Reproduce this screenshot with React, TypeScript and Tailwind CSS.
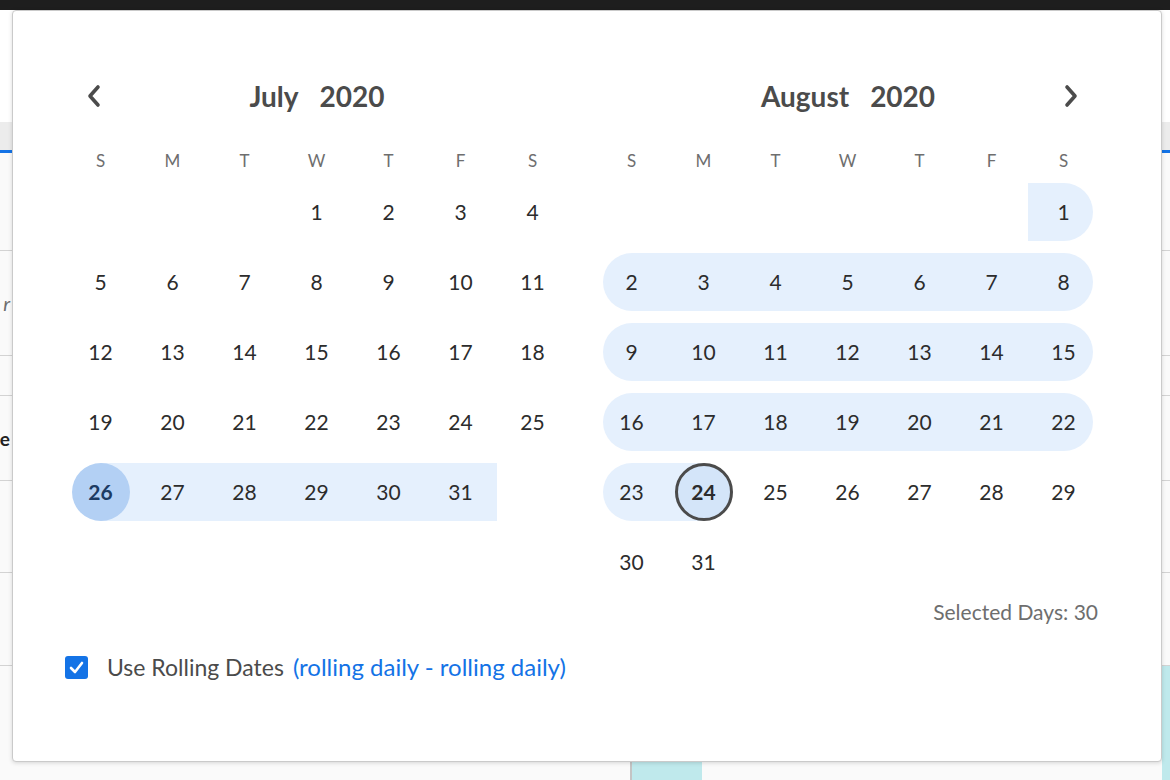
import React from "react";

type Month = { name: string; year: number; index: number; days: number; firstDow: number };

const july: Month = { name: "July", year: 2020, index: 6, days: 31, firstDow: 3 };
const august: Month = { name: "August", year: 2020, index: 7, days: 31, firstDow: 6 };

const dows = ["S", "M", "T", "W", "T", "F", "S"];

// range: July 26 -> August 24
const rangeStart = { m: 6, d: 26 };
const rangeEnd = { m: 7, d: 24 };

const key = (m: number, d: number) => m * 100 + d;

function Chevron({ dir }: { dir: "left" | "right" }) {
  return (
    <svg width="24" height="26" viewBox="0 0 24 26" fill="none">
      <polyline
        points={dir === "left" ? "16,4 8,13 16,22" : "8,4 16,13 8,22"}
        stroke="#4b4b4b"
        strokeWidth="3.6"
        strokeLinecap="round"
        strokeLinejoin="round"
      />
    </svg>
  );
}

function DayCell({ m, d, dow }: { m: number; d: number; dow: number }) {
  const k = key(m, d);
  const s = key(rangeStart.m, rangeStart.d);
  const e = key(rangeEnd.m, rangeEnd.d);
  const inRange = k >= s && k <= e;
  const isStart = k === s;
  const isEnd = k === e;
  const roundLeft = inRange && dow === 0 && !isStart;
  const roundRight = inRange && dow === 6 && !isEnd;

  let band = "";
  if (isStart) band = "bg-[linear-gradient(to_right,transparent_50%,#e5f0fd_50%)] justify-center";
  else if (isEnd) band = "bg-[linear-gradient(to_right,#e5f0fd_50%,transparent_50%)] justify-center";
  else if (inRange) {
    band = "bg-[#e5f0fd]";
    if (roundLeft) band += " rounded-l-full ml-[7px] justify-start";
    if (roundRight) band += " rounded-r-full mr-[7px] justify-end";
    if (!roundLeft && !roundRight) band += " justify-center";
  } else band = "justify-center";

  let circle = "text-[#2c2c2c]";
  if (isStart) circle = "bg-[#b3d0f4] font-bold text-[#1d3b63]";
  if (isEnd) circle = "bg-[#d4e5f9] border-[3px] border-[#4b4b4b] font-bold text-[#2c2c2c]";

  return (
    <div className="h-[70px] flex items-center">
      <div className={`h-[58px] flex-1 flex items-center ${band}`}>
        <div className={`w-[58px] h-[58px] shrink-0 rounded-full flex items-center justify-center text-[21px] pr-[1px] ${circle}`}>
          {d}
        </div>
      </div>
    </div>
  );
}

function MonthView({ month, nav }: { month: Month; nav: "left" | "right" }) {
  const cells: (number | null)[] = [];
  for (let i = 0; i < month.firstDow; i++) cells.push(null);
  for (let d = 1; d <= month.days; d++) cells.push(d);

  return (
    <div className="w-[504px]">
      <div className="h-[44px] flex items-center">
        <div className="w-[58px] flex justify-center">{nav === "left" && <Chevron dir="left" />}</div>
        <div className="flex-1 flex justify-center gap-[21px] text-[28px] font-bold text-[#4b4b4b]">
          <span>{month.name}</span>
          <span>{month.year}</span>
        </div>
        <div className="w-[58px] flex justify-center">{nav === "right" && <Chevron dir="right" />}</div>
      </div>
      <div className="mt-[27px] grid grid-cols-7 h-[32px] items-center">
        {dows.map((l, i) => (
          <div key={i} className="text-center text-[17px] text-[#6e6e6e] pr-[1px]">
            {l}
          </div>
        ))}
      </div>
      <div className="grid grid-cols-7">
        {cells.map((d, i) =>
          d === null ? (
            <div key={i} className="h-[70px]" />
          ) : (
            <DayCell key={i} m={month.index} d={d} dow={i % 7} />
          )
        )}
      </div>
    </div>
  );
}

function BgRow({ h, left }: { h: number; left?: React.ReactNode }) {
  return (
    <div className="flex border-b border-[#d3d3d3]" style={{ height: h }}>
      <div className="w-[12px] flex items-center justify-end pr-[2px]">{left}</div>
      <div className="flex-1" />
    </div>
  );
}

export default function App() {
  return (
    <div className="relative w-[1170px] h-[780px] overflow-hidden bg-[#fafafa] font-['Lato','Open_Sans',sans-serif]">
      <div className="h-[10px] bg-[#1e1e1e]" />
      {/* page behind the popover */}
      <div className="h-[112px] bg-white" />
      <div className="h-[28px] bg-[#ececec]" />
      <div className="h-[3px] bg-[#1473e6]" />
      <BgRow h={98} />
      <BgRow h={105} left={<span className="italic text-[20px] text-[#6e6e6e] leading-none">r</span>} />
      <BgRow h={40} />
      <BgRow h={85} left={<span className="font-bold text-[19px] text-[#222] leading-none">e</span>} />
      <BgRow h={92} />
      <BgRow h={93} />
      <div className="flex h-[115px]">
        <div className="w-[630px]" />
        <div className="w-[72px] bg-[#bfe9ec] border-l-2 border-[#c4c4c4]" />
        <div className="flex-1" />
        <div className="w-[8px] bg-[#bfe9ec]" />
      </div>

      {/* date range popover */}
      <div className="absolute left-[12px] top-[10px] w-[1150px] h-[752px] bg-white border border-[#cacaca] rounded-[4px] shadow-[0_1px_4px_rgba(0,0,0,0.15)] pl-[52px] pt-[63px]">
        <div className="flex gap-[27px]">
          <MonthView month={july} nav="left" />
          <div>
            <MonthView month={august} nav="right" />
            <div className="mt-[3px] pr-[2px] text-right text-[21px] leading-[24px] text-[#6e6e6e]">
              Selected Days: 30
            </div>
          </div>
        </div>
        <div className="mt-[31px] flex items-center h-[24px]">
          <div className="w-[23px] h-[23px] rounded-[3px] bg-[#1473e6] flex items-center justify-center">
            <svg width="15" height="13" viewBox="0 0 15 13" fill="none">
              <polyline points="2,7 6,11 13,2" stroke="white" strokeWidth="2.6" strokeLinecap="round" strokeLinejoin="round" />
            </svg>
          </div>
          <span className="ml-[19px] text-[23px] text-[#4b4b4b]">Use Rolling Dates</span>
          <span className="ml-[9px] text-[24px] text-[#1473e6]">(rolling daily - rolling daily)</span>
        </div>
      </div>
    </div>
  );
}
